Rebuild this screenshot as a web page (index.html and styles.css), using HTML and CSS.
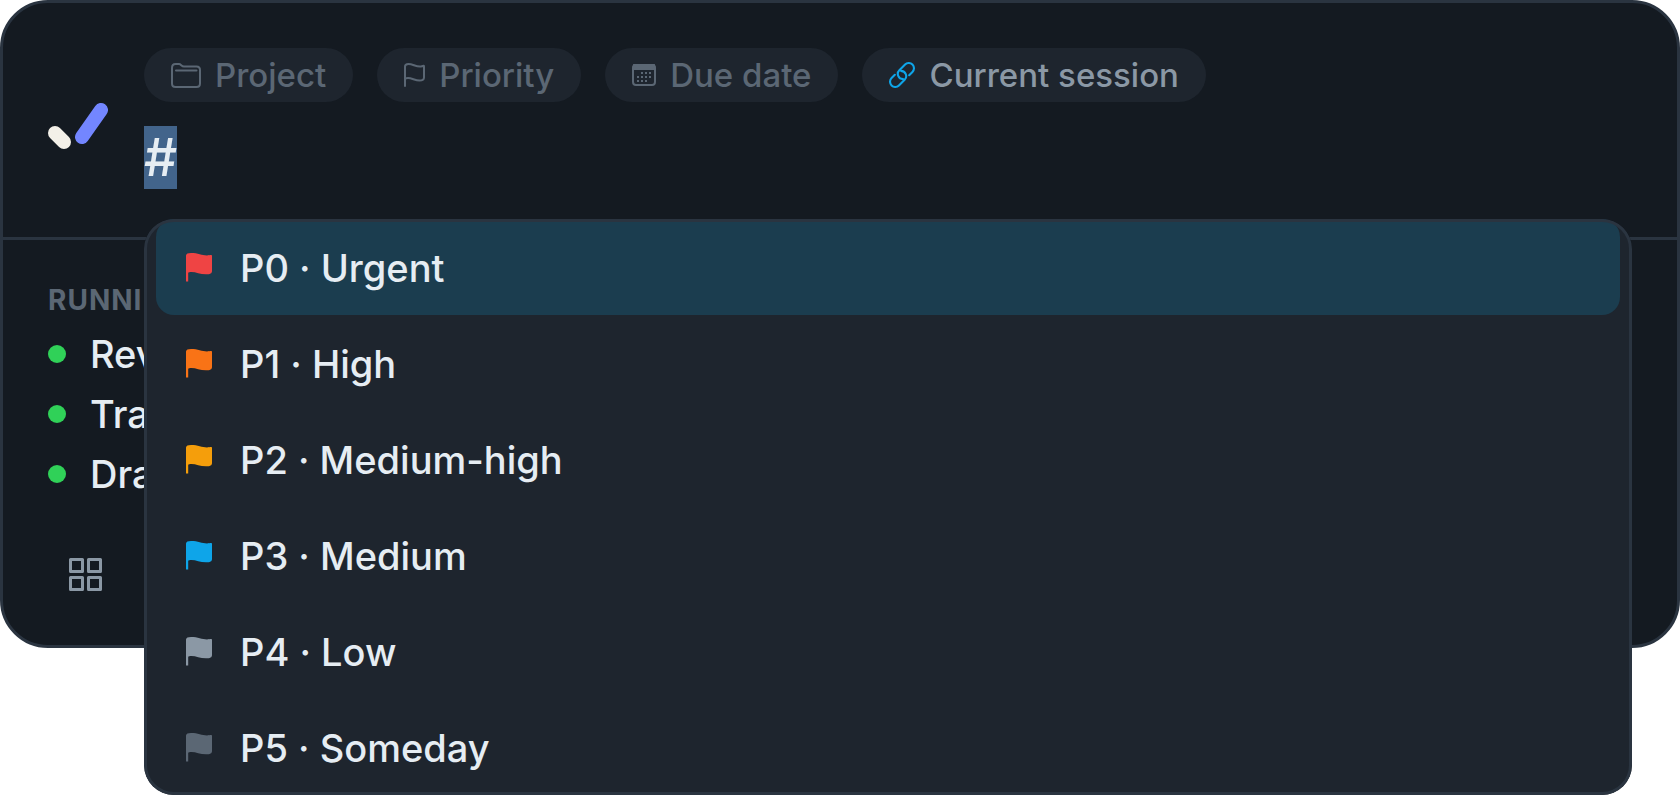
FILE: index.html
```html
<!doctype html>
<html lang="en">
    <head>
        <meta charset="utf-8">
        <title>Quick add</title>
        <link rel="stylesheet" href="styles.css">
    </head>
    <body>
        <!-- shared flag shape for the priority list -->
        <svg class="defs" aria-hidden="true">
            <symbol id="flag" viewBox="0 0 26 30">
                <path d="M0 3.5C0 1.800 2 1 5 1C12 1 16 3.400 21 3.400C23.500 3.400 26 2.200 26 3.800V19C26 21.500 24 22.300 20 22.300C14 22.300 10 20 5.500 20C3.800 20 2.400 20.300 2.200 20.800V29.500H0Z"/>
            </symbol>
        </svg>
        <main class="panel">
            <header class="top">
                <svg class="logo" viewBox="0 0 60 72" aria-hidden="true">
                    <path class="logo-short" d="M7 50L16 59"/>
                    <path class="logo-long" d="M53 27L34 54"/>
                </svg>
                <div class="entry">
                    <div class="chips">
                        <button class="chip" type="button">
                            <svg width="30" height="26" viewBox="0 0 30 26" aria-hidden="true">
                                <path d="M1 6C1 3 2 2 4.500 2H8C10 2 10.500 4.500 13 4.500H25.500C28 4.500 29 5.500 29 8V21.500C29 24 28 25 25.500 25H4.500C2 25 1 24 1 21.500ZM5 8.500H25.500"/>
                            </svg>
                            Project
                        </button>
                        <button class="chip" type="button">
                            <svg width="21" height="24" viewBox="0 0 21 24" aria-hidden="true">
                                <path d="M1 23V3.500C1 1.500 2.500 1 4.500 1C9 1 12 4 17 3.400C19 3.200 20 2 20 3.500V14.500C20 17 18.500 17.600 15.500 17.600C11 17.600 8 15 4 15C2 15 1 15.600 1 16.500"/>
                            </svg>
                            Priority
                        </button>
                        <button class="chip" type="button">
                            <svg width="24" height="22" viewBox="0 0 24 22" aria-hidden="true">
                                <rect x="1" y="1" width="22" height="20" rx="3"/>
                                <path class="solid" d="M2 1H22L23 5H1Z"/>
                                <path class="dots" d="M9 9H19M5 13H19M5 17H15"/>
                            </svg>
                            Due date
                        </button>
                        <button class="chip chip-set" type="button">
                            <svg width="26" height="26" viewBox="0 0 25 25" aria-hidden="true">
                                <path d="M5.600 12.300L2.460 15.460A5 5 0 0 0 9.540 22.540L15.040 17.040A5 5 0 0 0 11.500 8.500"/>
                                <path d="M19.400 12.700L22.540 9.540A5 5 0 0 0 15.460 2.460L9.960 7.960A5 5 0 0 0 13.500 16.500"/>
                            </svg>
                            Current session
                        </button>
                    </div>
                    <input class="task" id="task" type="text" value="#" aria-label="Task" autocomplete="off" spellcheck="false" autofocus>
                    <div class="menu" role="listbox" aria-label="Priority">
                        <button class="option active" type="button" role="option" aria-selected="true"><svg class="flag p0"><use href="#flag"/></svg><span>P0 · Urgent</span></button>
                        <button class="option" type="button" role="option"><svg class="flag p1"><use href="#flag"/></svg><span>P1 · High</span></button>
                        <button class="option" type="button" role="option"><svg class="flag p2"><use href="#flag"/></svg><span>P2 · Medium-high</span></button>
                        <button class="option" type="button" role="option"><svg class="flag p3"><use href="#flag"/></svg><span>P3 · Medium</span></button>
                        <button class="option" type="button" role="option"><svg class="flag p4"><use href="#flag"/></svg><span>P4 · Low</span></button>
                        <button class="option" type="button" role="option"><svg class="flag p5"><use href="#flag"/></svg><span>P5 · Someday</span></button>
                    </div>
                </div>
            </header>
            <section class="running">
                <h2>RUNNI</h2>
                <ul>
                    <li>Rev</li>
                    <li>Tra</li>
                    <li>Dra</li>
                </ul>
            </section>
            <footer class="bottom">
                <button class="grid-btn" type="button" aria-label="All tasks">
                    <svg width="33" height="33" viewBox="0 0 33 33" aria-hidden="true">
                        <path d="M1.500 1.500H13.500V13.500H1.500ZM19.500 1.500H31.500V13.500H19.500ZM1.500 19.500H13.500V31.500H1.500ZM19.500 19.500H31.500V31.500H19.500Z"/>
                    </svg>
                </button>
            </footer>
        </main>
<script>
    var task = document.getElementById("task");
    task.focus();
    task.select();
</script>
    </body>
</html>
```
FILE: styles.css
```css
* {
    box-sizing: border-box;
}
body {
    min-height: 100vh;
    margin: 0;
    background: #fff;
    color: #e6edf3;
    font-family: Inter, "Liberation Sans", sans-serif;
}
button {
    border: 0;
    background: none;
    color: inherit;
    font: inherit;
    cursor: pointer;
}
.defs {
    display: none;
}
.panel {
    background: #141a21;
    border: 3px solid #2a3440;
    border-radius: 48px;
}

/* logo, chips and the text box */
.top {
    display: flex;
    align-items: center;
    gap: 36px;
    padding: 45px 45px 48px;
    border-bottom: 3px solid #2a3440;
}
.logo {
    flex: none;
    width: 60px;
    height: 72px;
    fill: none;
    stroke-width: 14px;
    stroke-linecap: round;
}
.logo-short {
    stroke: #f3f0e8;
}
.logo-long {
    stroke: #7386ff;
}
.entry {
    position: relative;
    flex: 1;
    min-width: 0;
}
.chips {
    display: flex;
    gap: 24px;
    margin-bottom: 24px;
}
.chip {
    display: flex;
    align-items: center;
    gap: 14px;
    height: 54px;
    padding: 0 27px;
    border-radius: 27px;
    background: #1e252e;
    color: #5b6774;
    font-size: 33px;
    font-weight: 500;
    white-space: nowrap;
}
.chip svg {
    flex: none;
    fill: none;
    stroke: #5b6774;
    stroke-width: 2px;
    stroke-linecap: round;
}
.chip .solid {
    fill: #5b6774;
}
.chip .dots {
    stroke-dasharray: 2 2;
    stroke-linecap: butt;
}
.chip-set {
    color: #8b98a5;
}
.chip-set svg {
    stroke: #0ea5e9;
}
.task {
    display: block;
    width: 100%;
    height: 63px;
    padding: 0;
    border: 0;
    outline: 0;
    background: transparent;
    color: #e6edf3;
    font-family: inherit;
    font-size: 52px;
    font-weight: 500;
    line-height: 63px;
}
.task::selection {
    background: rgba(67, 101, 141, 0.99);
    color: #e6edf3;
}

/* priority list, the frame is drawn over the rows */
.menu {
    position: absolute;
    top: calc(100% + 30px);
    left: 0;
    right: 0;
    padding: 0 12px;
    overflow: hidden;
    border-radius: 30px;
    background: #1e252e;
}
.menu::after {
    content: "";
    position: absolute;
    inset: 0;
    border: 3px solid #2a3440;
    border-radius: 30px;
    pointer-events: none;
}
.option {
    display: flex;
    align-items: center;
    gap: 28px;
    width: 100%;
    height: 96px;
    padding: 0 30px;
    border-radius: 18px;
    font-size: 38px;
    font-weight: 500;
    text-align: left;
}
.option span {
    padding-top: 2px;
}
.active {
    background: #1b3d4f;
}
.flag {
    flex: none;
    width: 26px;
    height: 30px;
}
.p0 { fill: #ef4444; }
.p1 { fill: #f97316; }
.p2 { fill: #f59e0b; }
.p3 { fill: #0ea5e9; }
.p4 { fill: #8b98a5; }
.p5 { fill: #5b6774; }

.running {
    padding: 42px 45px 0;
}
.running h2 {
    margin: 0 0 6px;
    color: #5b6774;
    font-size: 28px;
    font-weight: 700;
    line-height: 36px;
    letter-spacing: 1px;
}
.running ul {
    margin: 0;
    padding: 0;
    list-style: none;
}
.running li {
    display: flex;
    align-items: center;
    gap: 24px;
    height: 60px;
    font-size: 38px;
    font-weight: 500;
}
.running li::before {
    content: "";
    width: 18px;
    height: 18px;
    border-radius: 50%;
    background: #30d158;
}
.bottom {
    padding: 30px 42px;
}
.grid-btn {
    display: flex;
    align-items: center;
    justify-content: center;
    width: 81px;
    height: 81px;
    padding: 0;
}
.grid-btn svg {
    fill: none;
    stroke: #8b98a5;
    stroke-width: 3px;
    stroke-linejoin: round;
}
```
